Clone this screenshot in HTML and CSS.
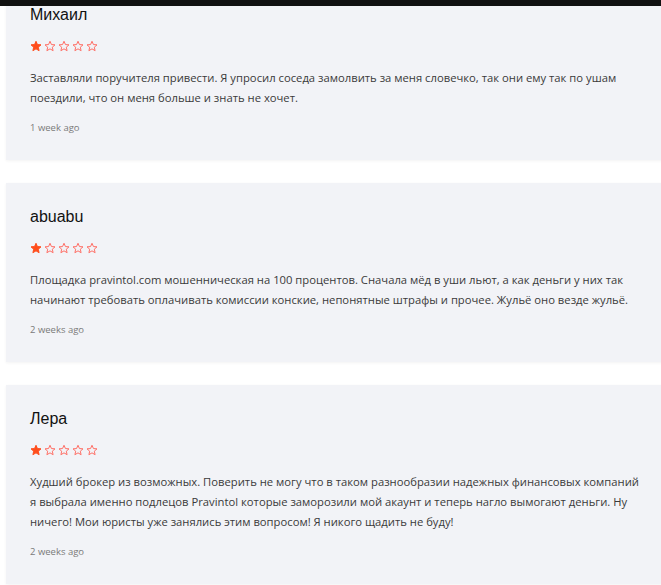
FILE: index.html
```
<!DOCTYPE html>
<html>
<head>
    <meta charset="utf-8" />
    <title>Отзывы</title>
    <link rel="stylesheet" href="styles.css">
</head>
<body>
    <div class="topbar"></div>
    <section class="reviews">
        <article class="review">
            <h4 class="review-name">Михаил</h4>
            <div class="stars">
                <svg class="star full" viewBox="0 0 24 24"><path d="M12 2.5l2.9 6.6 7.1.6-5.4 4.7 1.6 7-6.2-3.7-6.2 3.7 1.6-7L2 9.7l7.1-.6z"/></svg>
                <svg class="star" viewBox="0 0 24 24"><path d="M12 2.5l2.9 6.6 7.1.6-5.4 4.7 1.6 7-6.2-3.7-6.2 3.7 1.6-7L2 9.7l7.1-.6z"/></svg>
                <svg class="star" viewBox="0 0 24 24"><path d="M12 2.5l2.9 6.6 7.1.6-5.4 4.7 1.6 7-6.2-3.7-6.2 3.7 1.6-7L2 9.7l7.1-.6z"/></svg>
                <svg class="star" viewBox="0 0 24 24"><path d="M12 2.5l2.9 6.6 7.1.6-5.4 4.7 1.6 7-6.2-3.7-6.2 3.7 1.6-7L2 9.7l7.1-.6z"/></svg>
                <svg class="star" viewBox="0 0 24 24"><path d="M12 2.5l2.9 6.6 7.1.6-5.4 4.7 1.6 7-6.2-3.7-6.2 3.7 1.6-7L2 9.7l7.1-.6z"/></svg>
            </div>
            <p class="review-text">Заставляли поручителя привести. Я упросил соседа замолвить за меня словечко, так они ему так по ушам поездили, что он меня больше и знать не хочет.</p>
            <span class="review-date">1 week ago</span>
        </article>
        <article class="review">
            <h4 class="review-name">abuabu</h4>
            <div class="stars">
                <svg class="star full" viewBox="0 0 24 24"><path d="M12 2.5l2.9 6.6 7.1.6-5.4 4.7 1.6 7-6.2-3.7-6.2 3.7 1.6-7L2 9.7l7.1-.6z"/></svg>
                <svg class="star" viewBox="0 0 24 24"><path d="M12 2.5l2.9 6.6 7.1.6-5.4 4.7 1.6 7-6.2-3.7-6.2 3.7 1.6-7L2 9.7l7.1-.6z"/></svg>
                <svg class="star" viewBox="0 0 24 24"><path d="M12 2.5l2.9 6.6 7.1.6-5.4 4.7 1.6 7-6.2-3.7-6.2 3.7 1.6-7L2 9.7l7.1-.6z"/></svg>
                <svg class="star" viewBox="0 0 24 24"><path d="M12 2.5l2.9 6.6 7.1.6-5.4 4.7 1.6 7-6.2-3.7-6.2 3.7 1.6-7L2 9.7l7.1-.6z"/></svg>
                <svg class="star" viewBox="0 0 24 24"><path d="M12 2.5l2.9 6.6 7.1.6-5.4 4.7 1.6 7-6.2-3.7-6.2 3.7 1.6-7L2 9.7l7.1-.6z"/></svg>
            </div>
            <p class="review-text">Площадка pravintol.com мошенническая на 100 процентов. Сначала мёд в уши льют, а как деньги у них так начинают требовать оплачивать комиссии конские, непонятные штрафы и прочее. Жульё оно везде жульё.</p>
            <span class="review-date">2 weeks ago</span>
        </article>
        <article class="review">
            <h4 class="review-name">Лера</h4>
            <div class="stars">
                <svg class="star full" viewBox="0 0 24 24"><path d="M12 2.5l2.9 6.6 7.1.6-5.4 4.7 1.6 7-6.2-3.7-6.2 3.7 1.6-7L2 9.7l7.1-.6z"/></svg>
                <svg class="star" viewBox="0 0 24 24"><path d="M12 2.5l2.9 6.6 7.1.6-5.4 4.7 1.6 7-6.2-3.7-6.2 3.7 1.6-7L2 9.7l7.1-.6z"/></svg>
                <svg class="star" viewBox="0 0 24 24"><path d="M12 2.5l2.9 6.6 7.1.6-5.4 4.7 1.6 7-6.2-3.7-6.2 3.7 1.6-7L2 9.7l7.1-.6z"/></svg>
                <svg class="star" viewBox="0 0 24 24"><path d="M12 2.5l2.9 6.6 7.1.6-5.4 4.7 1.6 7-6.2-3.7-6.2 3.7 1.6-7L2 9.7l7.1-.6z"/></svg>
                <svg class="star" viewBox="0 0 24 24"><path d="M12 2.5l2.9 6.6 7.1.6-5.4 4.7 1.6 7-6.2-3.7-6.2 3.7 1.6-7L2 9.7l7.1-.6z"/></svg>
            </div>
            <p class="review-text">Худший брокер из возможных. Поверить не могу что в таком разнообразии надежных финансовых компаний я выбрала именно подлецов Pravintol которые заморозили мой акаунт и теперь нагло вымогают деньги. Ну ничего! Мои юристы уже занялись этим вопросом! Я никого щадить не буду!</p>
            <span class="review-date">2 weeks ago</span>
        </article>
    </section>
</body>
</html>
```
FILE: styles.css
```
body {
    margin: 0;
    background-color: #fff;
    font-family: "Open Sans", "Liberation Sans", sans-serif;
    overflow: hidden;
}

.topbar {
    position: fixed;
    top: 0;
    left: 0;
    right: 0;
    height: 6px;
    background-color: #111;
    z-index: 2;
}

.reviews {
    margin: -19px 0 0 6px;
    width: 658px;
}

.review {
    background-color: #f2f3f7;
    padding: 24px 24px 25px;
    margin-bottom: 23px;
    box-shadow: 0 1px 3px rgba(0, 0, 0, 0.05);
}

.review-name {
    margin: 0;
    font-family: "Liberation Sans", Arial, sans-serif;
    font-size: 16px;
    font-weight: normal;
    line-height: 19px;
    color: #111;
}

.stars {
    display: flex;
    gap: 2px;
    margin-top: 16px;
    height: 12px;
    align-items: center;
}

    .star {
        width: 12px;
        height: 12px;
        fill: none;
        stroke: #ff6f66;
        stroke-width: 2;
        stroke-linejoin: round;
    }

    .star.full {
        fill: #ff4d1c;
        stroke: #ff4d1c;
    }

.review-text {
    margin: 16px 0 0;
    font-size: 11.25px;
    line-height: 20px;
    color: #3a3a3a;
}

.review-date {
    display: block;
    margin-top: 12px;
    font-size: 9.5px;
    line-height: 15px;
    color: #7a7a7a;
}
```
